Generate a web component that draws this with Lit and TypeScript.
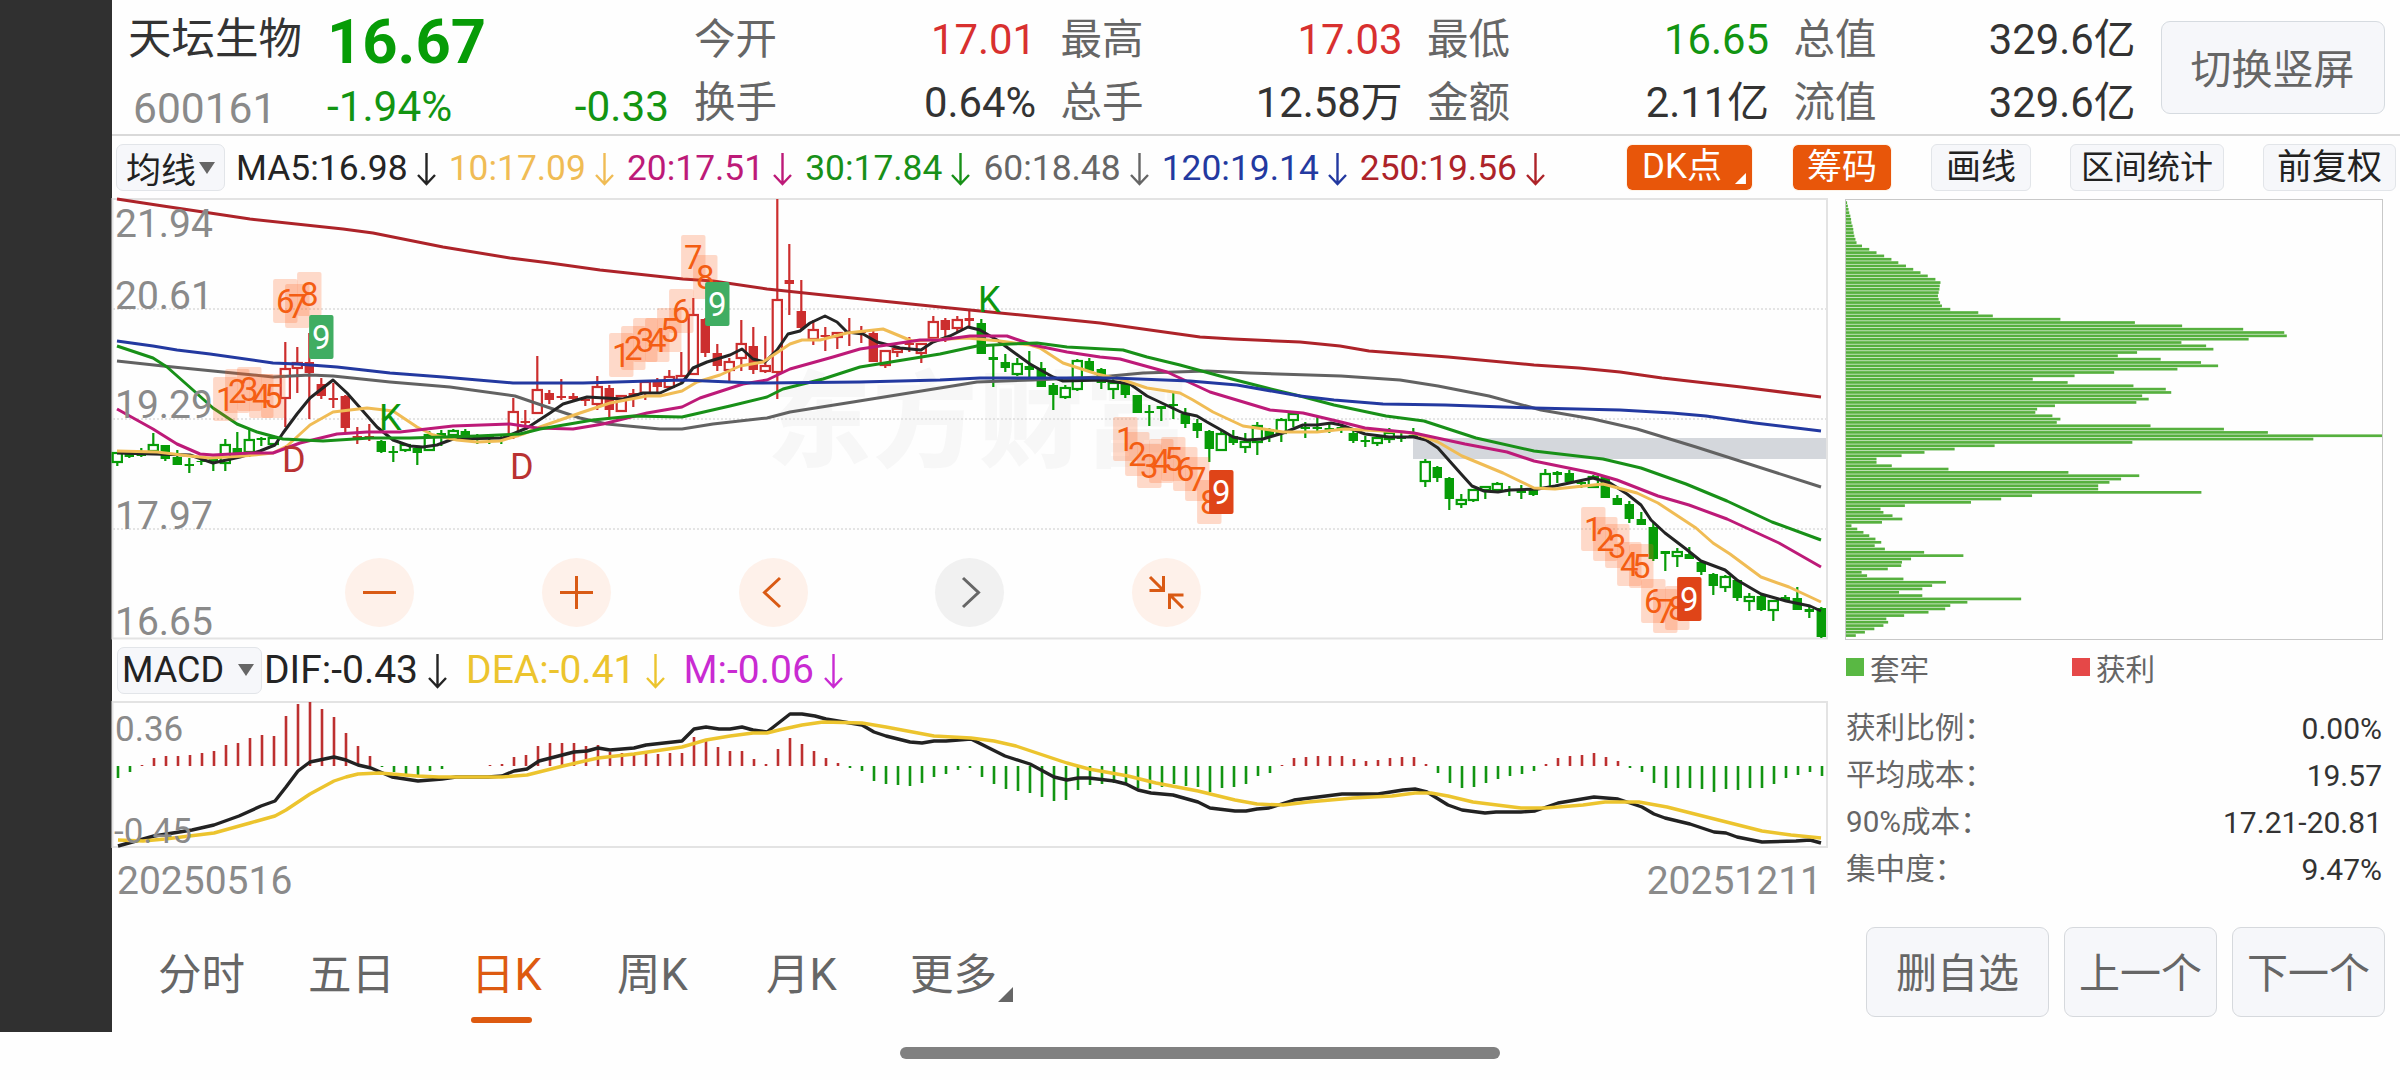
import { LitElement, html, svg, css, nothing } from "lit";
import { customElement, property } from "lit/decorators.js";
import { classMap } from "lit/directives/class-map.js";

type Pt = [number, number];
// [high, body top, body bottom, low, hollow]
type Candle = [number, number, number, number, number];

const STEP = 12;
const FIRST_X = 117.3;
const barX = (i: number) => FIRST_X + i * STEP;

const CANDLES: Candle[] = [
  [452, 453, 462, 466, 1], [453, 454, 457, 458, 0], [448, 453, 456, 457, 0], [433, 445, 451, 453, 1],
  [445, 445, 459, 461, 0], [450, 457, 465, 465, 0], [458, 464, 466, 473, 0], [458, 461, 462, 465, 0],
  [457, 459, 461, 471, 0], [439, 445, 463, 471, 1], [432, 448, 453, 455, 0], [430, 440, 452, 457, 1],
  [437, 438, 440, 446, 0], [437, 438, 444, 447, 1], [342, 369, 398, 427, 1], [347, 363, 368, 393, 1],
  [333, 362, 373, 419, 0], [378, 384, 396, 399, 0], [383, 398, 400, 408, 0], [395, 396, 428, 432, 0],
  [427, 436, 438, 444, 0], [424, 436, 438, 441, 0], [440, 441, 452, 453, 0], [446, 451, 453, 462, 0],
  [444, 445, 450, 452, 1], [448, 448, 453, 465, 0], [431, 435, 450, 451, 1], [430, 433, 437, 446, 0],
  [429, 431, 435, 438, 1], [429, 431, 438, 438, 0], [434, 436, 438, 444, 0], [435, 436, 438, 444, 0],
  [435, 437, 439, 444, 0], [398, 412, 436, 439, 1], [410, 421, 423, 430, 0], [356, 390, 413, 414, 1],
  [390, 393, 400, 404, 0], [379, 396, 398, 400, 0], [393, 396, 399, 402, 0], [398, 399, 401, 406, 0],
  [376, 387, 404, 410, 1], [385, 388, 410, 417, 0], [395, 396, 411, 411, 1], [389, 393, 397, 407, 0],
  [382, 382, 393, 400, 1], [378, 382, 387, 392, 0], [370, 377, 387, 389, 1], [352, 376, 380, 383, 1],
  [298, 315, 374, 374, 1], [318, 319, 353, 357, 0], [344, 353, 366, 371, 0], [358, 362, 370, 381, 1],
  [320, 344, 358, 371, 1], [327, 346, 370, 374, 0], [336, 366, 371, 373, 1], [199, 300, 372, 399, 1],
  [244, 280, 284, 315, 0], [280, 311, 328, 329, 0], [320, 330, 339, 345, 1], [327, 335, 337, 351, 0],
  [332, 333, 337, 349, 1], [318, 331, 333, 346, 0], [326, 331, 333, 343, 0], [329, 333, 362, 362, 0],
  [350, 351, 365, 368, 1], [346, 349, 352, 357, 1], [337, 343, 345, 352, 0], [343, 344, 353, 363, 1],
  [316, 322, 338, 340, 1], [318, 320, 330, 342, 0], [316, 320, 328, 332, 1], [309, 318, 321, 327, 0],
  [319, 323, 354, 354, 0], [346, 357, 360, 387, 0], [354, 362, 368, 372, 0], [358, 364, 374, 376, 1],
  [351, 366, 370, 377, 0], [362, 368, 387, 387, 0], [383, 385, 395, 410, 0], [385, 388, 397, 399, 1],
  [359, 361, 389, 391, 1], [358, 361, 371, 372, 0], [368, 369, 383, 389, 0], [378, 383, 389, 399, 1],
  [381, 382, 395, 398, 0], [395, 395, 413, 413, 0], [405, 411, 413, 426, 0], [406, 406, 409, 421, 0],
  [393, 404, 406, 419, 0], [408, 414, 424, 428, 0], [419, 423, 431, 438, 0], [430, 431, 449, 462, 0],
  [430, 434, 450, 451, 1], [430, 436, 443, 445, 0], [433, 442, 447, 453, 1], [422, 426, 442, 455, 1],
  [428, 429, 437, 442, 0], [418, 420, 433, 442, 1], [413, 414, 420, 427, 1], [422, 427, 429, 438, 0],
  [416, 427, 429, 433, 0], [422, 428, 430, 433, 0], [425, 427, 429, 433, 0], [431, 433, 441, 443, 0],
  [436, 440, 442, 447, 0], [435, 438, 443, 446, 1], [428, 433, 439, 443, 1], [432, 436, 439, 442, 0],
  [428, 435, 437, 438, 0], [459, 462, 481, 487, 1], [466, 467, 478, 482, 0], [477, 478, 499, 510, 0],
  [494, 500, 504, 508, 1], [489, 490, 500, 502, 1], [487, 487, 490, 499, 1], [482, 484, 490, 493, 1],
  [486, 489, 491, 496, 0], [485, 490, 493, 499, 0], [488, 490, 495, 496, 0], [469, 474, 488, 488, 1],
  [471, 472, 475, 483, 0], [470, 473, 482, 484, 0], [480, 482, 484, 488, 0], [475, 477, 487, 488, 1],
  [476, 477, 498, 498, 0], [495, 498, 505, 505, 0], [501, 504, 519, 523, 0], [512, 519, 525, 525, 0],
  [523, 527, 559, 561, 0], [551, 551, 554, 571, 0], [548, 552, 556, 567, 1], [547, 554, 559, 559, 0],
  [561, 562, 572, 575, 0], [573, 574, 586, 595, 0], [575, 577, 587, 592, 1], [580, 580, 598, 601, 0],
  [593, 597, 601, 611, 1], [595, 596, 610, 611, 0], [600, 601, 610, 621, 1], [595, 597, 601, 601, 0],
  [587, 598, 610, 610, 0], [606, 609, 612, 618, 0], [607, 608, 637, 638, 0],
];

// index ranges traded between a D signal and the following K signal
const RED_RANGES: Pt[] = [[14, 21], [33, 71]];
const isRed = (i: number) => RED_RANGES.some(([a, b]) => i >= a && i <= b);

const MA_LINES: { color: string; points: string }[] = [
  {
    color: "#626262",
    points:
      "117,361 163,366 243,374 273,377 310,375 333,376 390,382 450,387 515,396 550,408 580,418 607,424 660,429 682,429 713,424 767,418 790,412 853,402 940,388 977,382 1033,380 1100,377 1143,373 1207,371 1250,373 1341,376 1400,380 1438,386 1489,396 1541,410 1593,419 1637,429 1696,447 1821,487",
  },
  {
    color: "#242424",
    points:
      "117,453 190,455 213,463 240,457 260,451 275,445 283,433 297,414 310,398 333,380 347,393 377,427 393,440 410,446 423,447 437,445 453,439 503,438 527,428 550,413 563,404 587,397 623,399 643,393 660,393 682,383 693,368 707,362 730,355 742,349 753,359 765,362 777,350 788,334 800,331 810,323 825,316 837,322 847,332 863,334 877,342 900,348 921,350 933,342 950,336 968,327 980,330 997,340 1030,364 1053,377 1063,381 1103,380 1130,384 1147,396 1183,413 1197,416 1207,422 1223,431 1233,437 1247,440 1263,439 1283,433 1303,425 1317,425 1331,423 1341,425 1365,434 1389,437 1414,437 1426,440 1438,448 1462,475 1472,486 1484,491 1498,492 1510,490 1538,489 1555,486 1593,478 1610,483 1627,494 1641,505 1651,520 1665,533 1686,549 1701,561 1725,570 1737,580 1761,594 1786,601 1810,606 1821,611",
  },
  {
    color: "#f0bc55",
    points:
      "117,451 157,452 190,456 210,458 243,456 273,453 287,446 310,425 333,412 367,408 393,411 417,427 433,435 457,440 477,442 500,441 523,434 540,427 580,413 610,403 647,396 660,396 682,391 697,382 720,375 740,366 763,362 790,344 802,340 820,340 847,333 883,329 912,341 967,338 1000,341 1030,345 1040,348 1063,363 1097,374 1123,380 1147,388 1180,393 1193,400 1213,412 1243,426 1283,432 1317,432 1345,429 1403,432 1417,434 1438,442 1462,456 1503,473 1534,488 1555,489 1603,484 1637,493 1658,503 1696,528 1713,543 1730,554 1761,577 1789,587 1821,602",
  },
  {
    color: "#bd1a78",
    points:
      "117,409 153,429 177,444 200,454 213,455 250,453 273,453 300,443 337,434 367,432 400,432 453,426 510,424 537,428 573,429 603,424 647,413 682,407 700,398 743,384 767,380 790,369 833,357 860,349 900,343 920,340 940,340 970,336 1007,336 1033,345 1067,352 1100,357 1120,359 1167,372 1210,392 1270,410 1303,413 1341,422 1365,428 1414,433 1465,444 1507,452 1534,461 1593,473 1617,480 1658,496 1689,505 1727,519 1779,543 1821,567",
  },
  {
    color: "#189018",
    points:
      "117,346 153,358 167,367 193,390 213,408 237,424 257,432 283,439 323,441 370,438 410,438 477,436 520,434 540,429 593,420 633,416 682,417 730,406 767,397 783,389 823,379 860,367 903,360 940,354 977,346 1010,344 1037,343 1067,347 1123,350 1147,357 1180,365 1220,376 1267,388 1300,396 1334,405 1386,416 1424,421 1476,438 1534,451 1603,459 1641,468 1686,484 1727,501 1772,522 1821,540",
  },
  {
    color: "#2339a0",
    points:
      "117,341 153,346 177,350 210,354 273,363 297,364 337,367 390,373 443,377 513,383 583,383 683,380 753,383 860,382 940,380 980,378 1113,378 1190,381 1237,385 1300,396 1334,400 1383,404 1445,405 1534,408 1620,410 1672,413 1706,416 1755,423 1821,431",
  },
  {
    color: "#ad2329",
    points:
      "117,199 163,206 210,213 250,219 343,229 373,233 443,247 510,258 550,263 600,270 683,279 713,281 767,289 833,296 940,307 1000,313 1100,323 1200,337 1233,339 1300,342 1340,346 1369,351 1448,357 1534,365 1579,368 1620,372 1662,378 1741,387 1821,397",
  },
];

const MACD_BARS = [
  -12, -6, 1, 8, 10, 10, 11, 13, 15, 21, 23, 28, 31, 30, 50, 62, 64, 57, 49, 33, 20, 10, -1, -6, -8, -9, -5, -3,
  0, 0, 0, 1, 2, 9, 11, 20, 23, 23, 23, 20, 21, 14, 13, 12, 14, 12, 13, 13, 29, 26, 19, 15, 15, 7, 2, 17, 28,
  22, 15, 8, 3, -2, -5, -15, -18, -19, -20, -17, -11, -8, -4, -2, -11, -18, -23, -25, -27, -31, -35, -34, -24,
  -19, -18, -17, -18, -22, -23, -21, -18, -20, -21, -26, -22, -21, -18, -10, -7, 1, 8, 9, 10, 10, 10, 7, 5, 6,
  8, 9, 9, 2, -7, -17, -22, -21, -17, -13, -10, -8, -5, 2, 8, 10, 11, 13, 9, 5, -2, -6, -17, -22, -22, -22,
  -23, -26, -23, -24, -22, -22, -18, -12, -9, -6, -10,
];

const DIF =
  "118,846 154,836 192,830 214,825 239,816 261,806 275,801 286,787 298,771 310,762 334,757 346,760 358,765 371,768 392,777 418,781 442,779 456,777 488,777 502,776 514,771 527,769 539,761 574,752 587,751 598,748 610,750 634,748 646,745 682,741 694,729 706,727 719,729 730,729 742,727 753,730 767,732 790,714 802,714 815,716 826,719 862,725 874,732 886,736 910,742 922,743 934,741 946,741 971,739 1005,756 1030,764 1054,777 1067,780 1078,778 1089,778 1114,781 1126,784 1138,790 1151,793 1173,795 1198,802 1210,808 1235,811 1246,811 1257,809 1269,808 1294,800 1342,794 1378,794 1403,790 1415,789 1427,792 1448,805 1462,810 1485,813 1496,812 1521,812 1535,811 1558,803 1594,797 1618,799 1642,807 1654,814 1665,818 1690,824 1714,832 1726,833 1737,837 1762,842 1796,841 1810,840 1821,843";
const DEA =
  "118,840 143,841 165,839 214,833 250,823 275,816 286,810 310,794 334,781 346,777 358,774 379,773 417,776 439,777 502,777 527,775 563,766 576,763 598,758 634,754 682,747 706,740 730,736 753,733 767,733 779,730 802,725 823,722 862,723 886,727 934,736 971,738 994,741 1016,746 1067,763 1089,769 1128,776 1156,783 1198,791 1235,800 1257,804 1283,805 1308,802 1353,798 1392,796 1415,793 1431,793 1448,796 1473,802 1521,808 1546,808 1583,805 1605,802 1639,802 1667,807 1762,831 1791,835 1821,838";

// nine-turn sequence marks: [digit, candle index, top]
const TURNS: [number, number, number][] = [
  [1, 9, 377], [2, 10, 369], [3, 11, 367], [4, 12, 374], [5, 13, 374], [6, 14, 279], [7, 15, 284], [8, 16, 272],
  [1, 42, 333], [2, 43, 326], [3, 44, 318], [4, 45, 318], [5, 46, 308], [6, 47, 289], [7, 48, 235], [8, 49, 255],
  [1, 84, 417], [2, 85, 432], [3, 86, 444], [4, 87, 439], [5, 88, 437], [6, 89, 447], [7, 90, 457], [8, 91, 480],
  [1, 123, 507], [2, 124, 517], [3, 125, 524], [4, 126, 542], [5, 127, 544], [6, 128, 579], [7, 129, 589], [8, 130, 586],
];
const NINES: [number, number, string][] = [
  [17, 315, "#40ad62"],
  [50, 282, "#40ad62"],
  [92, 470, "#df4418"],
  [131, 577, "#df4418"],
];

const CHIPS = [
  3, 5, 7, 9, 12, 14, 15, 18, 20, 21, 23, 26, 29, 44, 64, 84, 105, 125, 144, 165, 185, 205, 225, 246, 260, 258,
  257, 255, 253, 255, 259, 264, 287, 364, 404, 590, 795, 925, 1093, 1206, 1213, 1108, 923, 991, 1011, 801, 748,
  866, 977, 1024, 912, 738, 629, 514, 610, 791, 880, 895, 815, 833, 799, 575, 526, 521, 568, 590, 580, 838,
  1040, 1161, 1475, 1286, 788, 409, 299, 216, 153, 84, 84, 126, 282, 612, 807, 757, 725, 694, 694, 978, 512,
  427, 344, 162, 95, 103, 128, 155, 99, 15, 31, 48, 64, 81, 97, 79, 107, 215, 323, 179, 154, 152, 115, 43, 58,
  158, 275, 237, 210, 146, 210, 482, 334, 287, 273, 227, 160, 111, 116, 103, 78, 52, 27,
];
const CHIP_MAX = 1475;

const downArrow = (h: number) => html`
  <svg class="arrow" width="19" height=${h} viewBox="0 0 19 ${h}">
    <path
      d="M9.5 0V${h - 2}M1 ${h - 11}L9.5 ${h - 2}L18 ${h - 11}"
      fill="none"
      stroke="currentColor"
      stroke-width="2.4"
    />
  </svg>
`;

/** 主图: K线 + 均线 */
@customElement("kline-chart")
export class KlineChart extends LitElement {
  static styles = css`
    :host {
      display: block;
    }
    svg {
      display: block;
      overflow: visible;
    }
    .axis {
      font-size: 39px;
      fill: #8a8a8a;
    }
    .turn {
      font-size: 33px;
      text-anchor: middle;
      fill: #f35d12;
    }
    .nine {
      fill: #fff;
    }
    .signal {
      font-size: 36px;
    }
    .watermark {
      font-family: "Noto Sans CJK SC", sans-serif;
      font-size: 104px;
      font-weight: 900;
      letter-spacing: 2px;
      fill: #f7f7f7;
    }
    .grid {
      stroke: #dcdcdc;
      stroke-width: 1.5;
      stroke-dasharray: 2 2;
    }
    .frame {
      fill: none;
      stroke: #e3e3e3;
      stroke-width: 2;
    }
    .ma {
      fill: none;
      stroke-width: 3;
      stroke-linejoin: round;
    }
  `;

  private renderCandle([high, top, bottom, low, hollow]: Candle, i: number) {
    const color = isRed(i) ? "#cc2e2e" : "#079c07";
    const x = barX(i);
    if (hollow) {
      return svg`
        <path d="M${x} ${high}V${top}M${x} ${bottom}V${low}" stroke=${color} stroke-width="2.2"/>
        <rect x=${x - 4.6} y=${top} width="9.2" height=${Math.max(bottom - top, 1)}
          fill="#fff" stroke=${color} stroke-width="2.2"/>`;
    }
    return svg`
      <path d="M${x} ${high}V${low}" stroke=${color} stroke-width="2.2"/>
      <rect x=${x - 4.7} y=${top} width="9.4" height=${bottom - top} fill=${color}/>`;
  }

  render() {
    return html`
      <svg width="1716" height="441" viewBox="112 199 1716 441">
        <text class="watermark" x="767" y="459">东方财富</text>
        ${[309, 419, 529].map((y) => svg`<path class="grid" d="M113 ${y}H1827"/>`)}
        <rect x="1413" y="438" width="414" height="21" fill="#d4d7dc" />
        <rect class="frame" x="112.5" y="199" width="1714.5" height="439.5" />
        ${CANDLES.map((c, i) => this.renderCandle(c, i))}
        ${MA_LINES.map((l) => svg`<polyline class="ma" stroke=${l.color} points=${l.points}/>`)}
        ${TURNS.map(
          ([n, i, y]) => svg`
            <rect x=${barX(i) - 12.2} y=${y} width="24.4" height="44" rx="2" fill="#ff6420" fill-opacity="0.24"/>
            <text class="turn" x=${barX(i)} y=${y + 34}>${n}</text>`
        )}
        ${NINES.map(
          ([i, y, color]) => svg`
            <rect x=${barX(i) - 12.2} y=${y} width="24.4" height="44" rx="2" fill=${color}/>
            <text class="turn nine" x=${barX(i)} y=${y + 33.5}>9</text>`
        )}
        <text class="signal" x="379" y="430" fill="#0d960d">K</text>
        <text class="signal" x="978" y="312" fill="#0d960d">K</text>
        <text class="signal" x="282" y="472" fill="#b93232">D</text>
        <text class="signal" x="510" y="479" fill="#b93232">D</text>
        <text class="axis" x="115" y="237">21.94</text>
        <text class="axis" x="115" y="309">20.61</text>
        <text class="axis" x="115" y="418">19.29</text>
        <text class="axis" x="115" y="529">17.97</text>
        <text class="axis" x="115" y="635">16.65</text>
      </svg>
    `;
  }
}

/** 副图: MACD */
@customElement("macd-chart")
export class MacdChart extends LitElement {
  static styles = css`
    :host {
      display: block;
    }
    svg {
      display: block;
      overflow: visible;
    }
    .axis {
      font-size: 35px;
      fill: #8a8a8a;
    }
    .frame {
      fill: none;
      stroke: #e3e3e3;
      stroke-width: 2;
    }
    .line {
      fill: none;
      stroke-width: 3.4;
      stroke-linejoin: round;
    }
  `;

  render() {
    return html`
      <svg width="1716" height="147" viewBox="112 701 1716 147">
        <rect class="frame" x="112.5" y="702" width="1714.5" height="145" />
        ${MACD_BARS.map((v, i) =>
          v === 0
            ? nothing
            : svg`<path d="M${barX(i) + 0.7} 766V${766 - v}" stroke=${v > 0 ? "#bd3030" : "#129512"} stroke-width="2.6"/>`
        )}
        <polyline class="line" stroke="#222" points=${DIF} />
        <polyline class="line" stroke="#ecc42e" points=${DEA} />
        <text class="axis" x="115" y="741">0.36</text>
        <text class="axis" x="114" y="843">-0.45</text>
      </svg>
    `;
  }
}

/** 筹码分布 */
@customElement("chip-panel")
export class ChipPanel extends LitElement {
  static styles = css`
    :host {
      display: flex;
      flex-direction: column;
      font-size: 29.6px;
      color: #666;
    }
    .plot {
      box-sizing: border-box;
      width: 538px;
      height: 441px;
      border: 1.5px solid #c8c8c8;
    }
    .plot svg {
      display: block;
    }
    .legend {
      display: grid;
      grid-template-columns: 226px 1fr;
      height: 56px;
      margin: -1px 0 10px 1px;
    }
    .legend-item {
      display: flex;
      align-items: center;
      gap: 6px;
    }
    .swatch {
      width: 18px;
      height: 18px;
      background: #59b843;
    }
    .swatch.profit {
      background: #e54848;
    }
    .row {
      display: flex;
      justify-content: space-between;
      width: 536px;
      margin-left: 1px;
      line-height: 47px;
    }
    .value {
      font-size: 30px;
      color: #333;
    }
  `;

  private rows = [
    ["获利比例：", "0.00%"],
    ["平均成本：", "19.57"],
    ["90%成本：", "17.21-20.81"],
    ["集中度：", "9.47%"],
  ];

  render() {
    return html`
      <div class="plot">
        <svg width="536" height="438" viewBox="0 0 536 438">
          ${CHIPS.map(
            (v, i) => svg`
              <rect x="0" y=${1.3 + i * 3.33} width=${(v / CHIP_MAX) * 536} height="2.7" fill="#56b03e"/>`
          )}
        </svg>
      </div>
      <div class="legend">
        <div class="legend-item"><i class="swatch"></i>套牢</div>
        <div class="legend-item"><i class="swatch profit"></i>获利</div>
      </div>
      ${this.rows.map(
        ([label, value]) => html`
          <div class="row"><span>${label}</span><span class="value">${value}</span></div>
        `
      )}
    `;
  }
}

/** 行情头部 */
@customElement("quote-header")
export class QuoteHeader extends LitElement {
  @property({ attribute: false })
  stats: [string, string, string][] = [
    ["今开", "17.01", "up"],
    ["最高", "17.03", "up"],
    ["最低", "16.65", "down"],
    ["总值", "329.6亿", ""],
    ["换手", "0.64%", ""],
    ["总手", "12.58万", ""],
    ["金额", "2.11亿", ""],
    ["流值", "329.6亿", ""],
  ];

  static styles = css`
    :host {
      display: flex;
      box-sizing: border-box;
      height: 136px;
      padding-left: 16px;
      border-bottom: 2px solid #d9d9d9;
      color: #333;
    }
    .quote {
      display: grid;
      grid-template-columns: 199px 342px;
      grid-template-rows: 69px 66px;
      width: 566px;
    }
    .name {
      font-size: 43.5px;
      line-height: 80px;
    }
    .price {
      font-size: 61.5px;
      font-weight: 700;
      line-height: 84px;
      color: #079c07;
    }
    .code {
      padding-left: 5px;
      font-size: 42.5px;
      line-height: 80px;
      color: #8a8a8a;
    }
    .change {
      display: flex;
      justify-content: space-between;
      font-size: 42.3px;
      line-height: 75px;
      color: #129512;
    }
    .stats {
      display: grid;
      grid-template-columns: repeat(4, 342px);
      grid-auto-rows: 63px;
      column-gap: 24.5px;
      padding-top: 8px;
      font-size: 41.8px;
      line-height: 63px;
    }
    .stat {
      display: flex;
      justify-content: space-between;
    }
    .label {
      font-size: 41.5px;
      color: #666;
    }
    .up {
      color: #d8302f;
    }
    .down {
      color: #129512;
    }
    .rotate {
      box-sizing: border-box;
      width: 224px;
      height: 93px;
      margin: 21px 0 0 25px;
      border: 1.5px solid #d6dbe0;
      border-radius: 9px;
      background: #f6f7fa;
      font-size: 41px;
      line-height: 96px;
      text-align: center;
      color: #666;
    }
  `;

  render() {
    return html`
      <div class="quote">
        <span class="name">天坛生物</span>
        <span class="price">16.67</span>
        <span class="code">600161</span>
        <span class="change"><span>-1.94%</span><span>-0.33</span></span>
      </div>
      <div class="stats">
        ${this.stats.map(
          ([label, value, dir]) => html`
            <div class="stat">
              <span class="label">${label}</span>
              <span class=${classMap({ up: dir === "up", down: dir === "down" })}>${value}</span>
            </div>
          `
        )}
      </div>
      <div class="rotate">切换竖屏</div>
    `;
  }
}

@customElement("app-root")
export class AppRoot extends LitElement {
  static styles = css`
    :host {
      display: flex;
      flex-direction: column;
      width: 2400px;
      height: 1080px;
      overflow: hidden;
      background: #fefefe;
      font-family: Roboto, "Noto Sans CJK SC", sans-serif;
      color: #222;
    }
    .screen {
      display: flex;
      height: 1032px;
    }
    .cutout {
      width: 112px;
      background: #303030;
    }
    .content {
      flex: 1;
      min-width: 0;
    }
    .ma-row {
      display: flex;
      align-items: center;
      height: 63px;
      padding-left: 4px;
      font-size: 35.4px;
    }
    .select {
      display: flex;
      align-items: center;
      box-sizing: border-box;
      height: 47px;
      border: 1.5px solid #e2e5e9;
      border-radius: 7px;
      background: #f6f7fa;
    }
    .select::after {
      content: "";
      border: 8px solid transparent;
      border-top: 12px solid #666;
      border-bottom: 0;
    }
    .ma-select {
      width: 109px;
      padding-left: 9px;
      gap: 3px;
      margin-right: 11px;
      font-size: 35px;
    }
    .ma-item {
      display: flex;
      align-items: center;
      gap: 9px;
      margin-right: 13px;
      white-space: nowrap;
    }
    .arrow {
      display: block;
      margin-top: 3px;
    }
    .tools {
      display: flex;
      gap: 39px;
      margin-left: auto;
      padding-right: 4px;
      font-size: 35px;
    }
    .tool {
      box-sizing: border-box;
      width: 100px;
      height: 47px;
      border: 1.5px solid #e2e5e9;
      border-radius: 6px;
      background: #f6f7fa;
      line-height: 46px;
      text-align: center;
      white-space: nowrap;
    }
    .tool.range {
      width: 154px;
      font-size: 33px;
    }
    .tool.adjust {
      width: 133px;
    }
    .tool.on {
      border-color: #fdf3e8;
      background: #e8560a;
      background-clip: padding-box;
      color: #fff;
    }
    .tool.dk {
      display: flex;
      align-items: flex-end;
      width: 127px;
      padding-left: 15px;
      gap: 13px;
    }
    .tool.dk::after,
    .tab.more::after {
      content: "";
      width: 11px;
      height: 11px;
      margin-bottom: 6px;
      background: currentColor;
      clip-path: polygon(100% 0, 100% 100%, 0 100%);
    }
    .body {
      display: grid;
      grid-template-columns: 1716px 1fr;
      column-gap: 17px;
      height: 711px;
    }
    .main-chart {
      position: relative;
    }
    .controls {
      position: absolute;
      left: 233px;
      top: 359px;
      display: flex;
      gap: 127.8px;
    }
    .control {
      width: 69px;
      height: 69px;
      border-radius: 50%;
      background: #fef1ea;
      color: #d95a14;
    }
    .control.off {
      background: #f1f1f1;
      color: #666;
    }
    .control svg {
      display: block;
    }
    .macd-row {
      display: flex;
      align-items: center;
      box-sizing: border-box;
      height: 61px;
      padding: 0 0 1px 5px;
      font-size: 39px;
    }
    .macd-select {
      width: 145px;
      padding-left: 4px;
      gap: 14px;
      margin-right: 2px;
      font-size: 36px;
    }
    .macd-item {
      display: flex;
      align-items: center;
      gap: 10px;
      margin-right: 19px;
      white-space: nowrap;
    }
    .dates {
      display: flex;
      justify-content: space-between;
      padding: 0 6px 0 5px;
      font-size: 39px;
      line-height: 66px;
      color: #8a8a8a;
    }
    .footer {
      display: flex;
      height: 122px;
      color: #666;
    }
    .tabs {
      display: grid;
      grid-template-columns: 150px 163px 146px 149px 144px auto;
      padding-left: 46px;
      font-size: 43.5px;
      line-height: 131px;
    }
    .tab {
      display: flex;
      flex-direction: column;
      height: 122px;
    }
    .tab.active {
      color: #dd5a10;
    }
    .tab.active::after {
      content: "";
      width: 61px;
      height: 6px;
      margin-top: -24px;
      border-radius: 3px;
      background: currentColor;
    }
    .tab.more {
      flex-direction: row;
      align-items: flex-start;
      gap: 1px;
    }
    .tab.more::after {
      width: 15px;
      height: 15px;
      margin-top: 77px;
    }
    .actions {
      display: flex;
      gap: 15px;
      margin: 17px 15px 0 auto;
    }
    .action {
      box-sizing: border-box;
      width: 153px;
      height: 90px;
      border: 1.5px solid #d6d9dd;
      border-radius: 9px;
      background: #f6f7fa;
      font-size: 41px;
      line-height: 92px;
      text-align: center;
    }
    .action.wide {
      width: 183px;
    }
    .home-bar {
      width: 600px;
      height: 12px;
      margin: 15px auto 0;
      border-radius: 6px;
      background: #808080;
    }
    .c-black {
      color: #242424;
    }
    .c-yellow {
      color: #f0bc55;
    }
    .c-pink {
      color: #bd1a78;
    }
    .c-green {
      color: #189018;
    }
    .c-gray {
      color: #666;
    }
    .c-blue {
      color: #2339a0;
    }
    .c-red {
      color: #ad2329;
    }
    .c-gold {
      color: #ecc42e;
    }
    .c-purple {
      color: #c92bd2;
    }
  `;

  private averages = [
    ["MA5:16.98", "c-black"],
    ["10:17.09", "c-yellow"],
    ["20:17.51", "c-pink"],
    ["30:17.84", "c-green"],
    ["60:18.48", "c-gray"],
    ["120:19.14", "c-blue"],
    ["250:19.56", "c-red"],
  ];

  private macd = [
    ["DIF:-0.43", "c-black"],
    ["DEA:-0.41", "c-gold"],
    ["M:-0.06", "c-purple"],
  ];

  private tabs = [
    ["分时", ""],
    ["五日", ""],
    ["日K", "active"],
    ["周K", ""],
    ["月K", ""],
    ["更多", "more"],
  ];

  private controls = [
    ["M18 34.5H51", ""],
    ["M18 34.5H51M34.5 18V51", ""],
    ["M41 20L25.5 34.5L41 49", ""],
    ["M28 20L43.5 34.5L28 49", "off"],
    ["M18 19L31 32M31.5 18V32.5H17.5M51 50L38 37M37.5 51V37H51.5", ""],
  ];

  render() {
    return html`
      <div class="screen">
        <div class="cutout"></div>
        <div class="content">
          <quote-header></quote-header>
          <div class="ma-row">
            <div class="select ma-select">均线</div>
            ${this.averages.map(
              ([text, color]) => html`<div class="ma-item ${color}">${text}${downArrow(33)}</div>`
            )}
            <div class="tools">
              <div class="tool on dk">DK点</div>
              <div class="tool on">筹码</div>
              <div class="tool">画线</div>
              <div class="tool range">区间统计</div>
              <div class="tool adjust">前复权</div>
            </div>
          </div>
          <div class="body">
            <div>
              <div class="main-chart">
                <kline-chart></kline-chart>
                <div class="controls">
                  ${this.controls.map(
                    ([d, cls]) => html`
                      <div class="control ${cls}">
                        <svg width="69" height="69" viewBox="0 0 69 69">
                          <path d=${d} fill="none" stroke="currentColor" stroke-width="3" />
                        </svg>
                      </div>
                    `
                  )}
                </div>
              </div>
              <div class="macd-row">
                <div class="select macd-select">MACD</div>
                ${this.macd.map(
                  ([text, color]) => html`<div class="macd-item ${color}">${text}${downArrow(35)}</div>`
                )}
              </div>
              <macd-chart></macd-chart>
              <div class="dates"><span>20250516</span><span>20251211</span></div>
            </div>
            <chip-panel></chip-panel>
          </div>
          <div class="footer">
            <div class="tabs">
              ${this.tabs.map(([label, cls]) => html`<div class="tab ${cls}">${label}</div>`)}
            </div>
            <div class="actions">
              <div class="action wide">删自选</div>
              <div class="action">上一个</div>
              <div class="action">下一个</div>
            </div>
          </div>
        </div>
      </div>
      <div class="home-bar"></div>
    `;
  }
}
